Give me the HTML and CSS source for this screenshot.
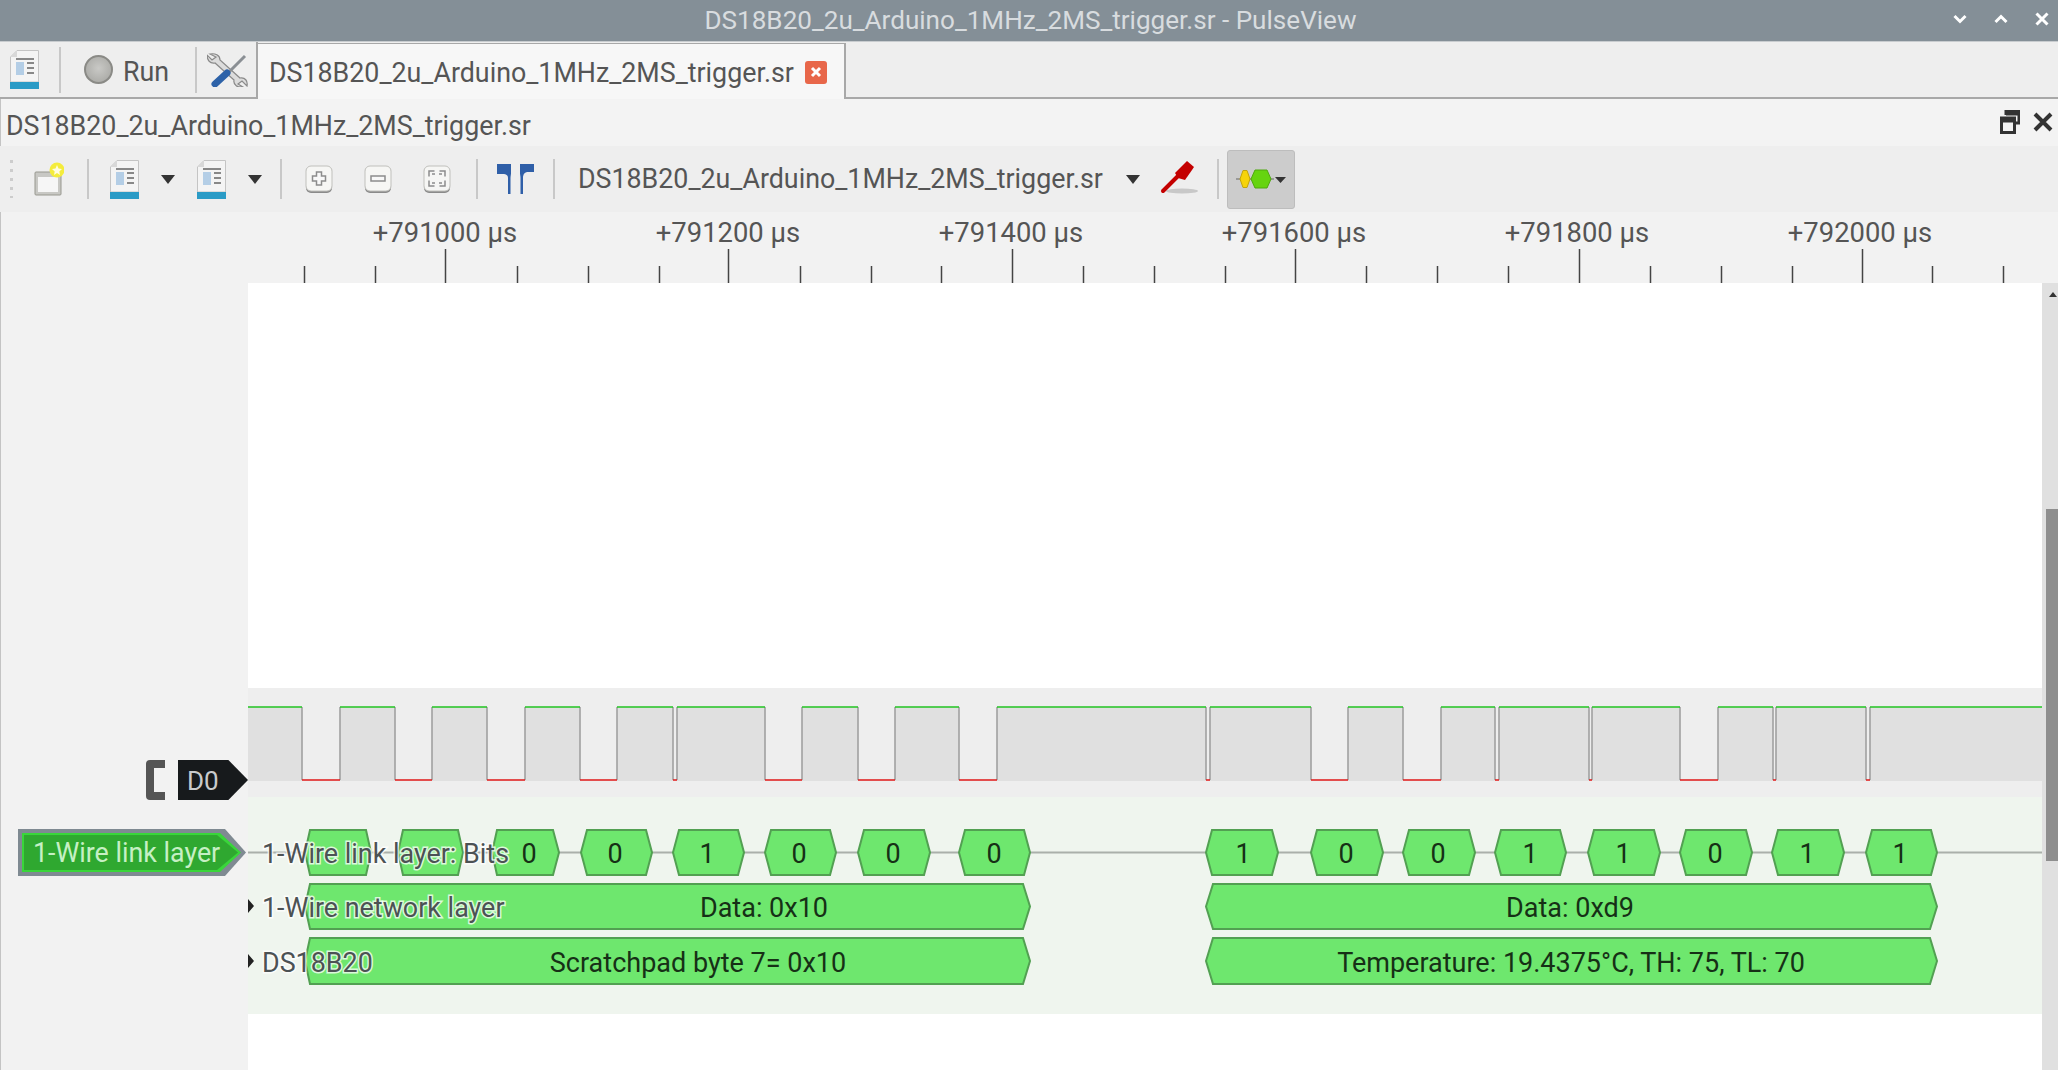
FILE: index.html
```html
<!DOCTYPE html>
<html lang="en">
<head>
    <meta charset="UTF-8">
    <title>DS18B20_2u_Arduino_1MHz_2MS_trigger.sr - PulseView</title>
    <link rel="stylesheet" href="styles.css">
</head>
<body>
    <svg class="defs">
        <symbol id="doc" viewBox="0 0 29 39">
            <path class="doc-paper" d="M7 .5H28.5V32H.5V7Z"/>
            <path class="doc-fold" d="M7 .5V7H.5Z"/>
            <rect class="doc-block" x="6" y="12" width="8" height="13"/>
            <path class="doc-lines" d="M6 9H24M17 13H24M17 18H24M17 23H24"/>
            <rect class="doc-bar" y="32" width="29" height="7"/>
        </symbol>
    </svg>

    <header class="titlebar">
        <span class="title">DS18B20_2u_Arduino_1MHz_2MS_trigger.sr - PulseView</span>
        <div class="win-controls">
            <svg width="14" height="10" viewBox="0 0 14 10"><path d="M1.5 2L7 7.5L12.5 2"/></svg>
            <svg width="14" height="10" viewBox="0 0 14 10"><path d="M1.5 8L7 2.5L12.5 8"/></svg>
            <svg width="14" height="14" viewBox="0 0 14 14"><path d="M1.5 1.5L12.5 12.5M12.5 1.5L1.5 12.5"/></svg>
        </div>
    </header>

    <div class="tabbar">
        <div class="main-tools">
            <svg class="doc-icon" width="29" height="39"><use href="#doc"/></svg>
            <span class="sep sep-tall"></span>
            <span class="run-led"></span>
            <span class="run-label">Run</span>
            <span class="sep sep-tall"></span>
            <svg class="tools-icon" width="41" height="34" viewBox="0 0 41 34">
                <path class="wrench" d="M3 1C8 0 13 2 13 7L33 25C38 24 41 28 40 33L35 28L31 31L36 34C31 35 26 32 27 27L8 10C3 11 0 7 0 2L5 7L9 4Z"/>
                <path class="driver-shaft" d="M22 19L38 3"/>
                <path class="driver-handle" d="M8 31L20 20"/>
            </svg>
        </div>
        <div class="tab">
            <span class="tab-label">DS18B20_2u_Arduino_1MHz_2MS_trigger.sr</span>
            <span class="tab-close">
                <svg width="12" height="12" viewBox="0 0 12 12"><path d="M2 2L10 10M10 2L2 10"/></svg>
            </span>
        </div>
    </div>

    <div class="panel-title">
        <span class="panel-name">DS18B20_2u_Arduino_1MHz_2MS_trigger.sr</span>
        <div class="dock-controls">
            <svg width="20" height="24" viewBox="0 0 20 24"><path d="M6 5V1.5H19V13H15M1.5 8H14.5V22.5H1.5ZM1.5 11H14.5M6 4H19"/></svg>
            <svg width="20" height="20" viewBox="0 0 20 20"><path d="M2 2L18 18M18 2L2 18"/></svg>
        </div>
    </div>

    <div class="toolbar">
        <span class="gripper"></span>
        <svg class="new-view" width="30" height="34" viewBox="0 0 30 34">
            <rect class="win-frame" x="1" y="10" width="26" height="23" rx="1"/>
            <rect class="win-inner" x="4" y="15" width="20" height="15"/>
            <circle class="star-glow" cx="23" cy="8" r="7.5"/>
            <path class="star" d="M23 3L24.5 6.5L28 7L25.3 9.4L26 13L23 11L20 13L20.7 9.4L18 7L21.500 6.500Z"/>
        </svg>
        <span class="sep"></span>
        <svg class="doc-icon" width="29" height="39"><use href="#doc"/></svg>
        <span class="caret"></span>
        <svg class="doc-icon" width="29" height="39"><use href="#doc"/></svg>
        <span class="caret caret-last"></span>
        <span class="sep"></span>
        <svg class="zoom-btn" width="28" height="29" viewBox="0 0 28 29">
            <rect class="btn-shadow" x="1" y="2" width="26" height="26" rx="5"/>
            <rect class="btn-face" x="1" y="1" width="26" height="25" rx="5"/>
            <path class="btn-glyph" d="M11.500 7H16.500V11H20.500V16H16.500V20H11.500V16H7.500V11H11.500Z"/>
        </svg>
        <svg class="zoom-btn" width="28" height="29" viewBox="0 0 28 29">
            <rect class="btn-shadow" x="1" y="2" width="26" height="26" rx="5"/>
            <rect class="btn-face" x="1" y="1" width="26" height="25" rx="5"/>
            <rect class="btn-glyph" x="7" y="11" width="14" height="5"/>
        </svg>
        <svg class="zoom-btn" width="28" height="29" viewBox="0 0 28 29">
            <rect class="btn-shadow" x="1" y="2" width="26" height="26" rx="5"/>
            <rect class="btn-face" x="1" y="1" width="26" height="25" rx="5"/>
            <path class="btn-glyph btn-glyph-open" d="M11.500 6H6V11.500M16.500 6H22V11.500M9 9H12M19 9H16M11.500 21H6V15.500M16.500 21H22V15.500M9 18H12M19 18H16"/>
        </svg>
        <span class="sep"></span>
        <svg class="cursors" width="37" height="30" viewBox="0 0 37 30">
            <path class="cursor-fill" d="M0 0H14V9C14 11 13.500 12 13.500 14V30H11V14C11 11 9 10 6 10H0ZM23 0H37V8H31C28 8 26 10 26 14V30H23.500V14C23.500 12 23 11 23 9Z"/>
        </svg>
        <span class="sep"></span>
        <span class="session">DS18B20_2u_Arduino_1MHz_2MS_trigger.sr</span>
        <span class="caret"></span>
        <svg class="probe" width="40" height="36" viewBox="0 0 40 36">
            <ellipse class="probe-shadow" cx="22" cy="30" rx="16" ry="2.500"/>
            <path class="probe-wire" d="M3 30L20 13"/>
            <path class="probe-body" d="M15 12L24 3L27 0L34 6L32 9L25 19L18 17Z"/>
        </svg>
        <span class="sep"></span>
        <span class="decoder-btn">
            <svg width="50" height="20" viewBox="0 0 50 20">
                <path class="dec-line" d="M0 10H38"/>
                <path class="dec-yellow" d="M4 10L7 1.500H11L14 10L11 18.500H7Z"/>
                <path class="dec-green" d="M15 10L19 1H31L35 10L31 19H19Z"/>
                <path class="dec-caret" d="M39 8H50L44.500 14Z"/>
            </svg>
        </span>
    </div>

    <main class="view">
        <aside class="headers">
            <div class="logic-head">
                <svg class="bracket" width="20" height="40" viewBox="0 0 20 40"><path d="M19 4H4V36H19"/></svg>
                <span class="d0-tag">D0</span>
            </div>
            <div class="decoder-tag">
                <div class="decoder-tag-edge">
                    <div class="decoder-tag-face">1-Wire link layer</div>
                </div>
            </div>
        </aside>

        <section class="traces">
            <svg class="ruler" viewBox="248 212 1810 71" width="1810" height="71">
                <path class="tick" d="M304.500 266V283M375.500 266V283M517.500 266V283M588.500 266V283M659.500 266V283M800.500 266V283M871.500 266V283M941.500 266V283M1083.500 266V283M1154.500 266V283M1225.500 266V283M1366.500 266V283M1437.500 266V283M1508.500 266V283M1650.500 266V283M1721.500 266V283M1792.500 266V283M1932.500 266V283M2003.500 266V283"/>
                <path class="tick" d="M445.500 249V283M728.500 249V283M1012.500 249V283M1295.500 249V283M1579.500 249V283M1862.500 249V283"/>
                <text class="ruler-label" x="445" y="242">+791000 µs</text>
                <text class="ruler-label" x="728" y="242">+791200 µs</text>
                <text class="ruler-label" x="1011" y="242">+791400 µs</text>
                <text class="ruler-label" x="1294" y="242">+791600 µs</text>
                <text class="ruler-label" x="1577" y="242">+791800 µs</text>
                <text class="ruler-label" x="1860" y="242">+792000 µs</text>
            </svg>

            <div class="canvas-row">
                <svg class="canvas" viewBox="248 283 1794 787" width="1794" height="787">
                    <rect class="band-logic" x="248" y="688" width="1794" height="109"/>
                    <rect class="band-decoder" x="248" y="797" width="1794" height="217"/>

                    <!-- D0 -->
                    <path class="wave-fill" d="M248 707H302V781H248ZM340 707H395V781H340ZM432 707H487V781H432ZM525 707H580V781H525ZM617 707H673V781H617ZM677 707H765V781H677ZM802 707H858V781H802ZM895 707H959V781H895ZM997 707H1206V781H997ZM1210 707H1311V781H1210ZM1348 707H1403V781H1348ZM1441 707H1495V781H1441ZM1499 707H1589V781H1499ZM1592 707H1680V781H1592ZM1718 707H1773V781H1718ZM1776 707H1866V781H1776ZM1870 707H2042V781H1870Z"/>
                    <path class="wave-edge" d="M302 707V780M340 707V780M395 707V780M432 707V780M487 707V780M525 707V780M580 707V780M617 707V780M673 707V780M677 707V780M765 707V780M802 707V780M858 707V780M895 707V780M959 707V780M997 707V780M1206 707V780M1210 707V780M1311 707V780M1348 707V780M1403 707V780M1441 707V780M1495 707V780M1499 707V780M1589 707V780M1592 707V780M1680 707V780M1718 707V780M1773 707V780M1776 707V780M1866 707V780M1870 707V780"/>
                    <path class="wave-high" d="M248 707H302M340 707H395M432 707H487M525 707H580M617 707H673M677 707H765M802 707H858M895 707H959M997 707H1206M1210 707H1311M1348 707H1403M1441 707H1495M1499 707H1589M1592 707H1680M1718 707H1773M1776 707H1866M1870 707H2042"/>
                    <path class="wave-low" d="M302 780H340M395 780H432M487 780H525M580 780H617M673 780H677M765 780H802M858 780H895M959 780H997M1206 780H1210M1311 780H1348M1403 780H1441M1495 780H1499M1589 780H1592M1680 780H1718M1773 780H1776M1866 780H1870"/>

                    <!-- decoder rows -->
                    <path class="row-line" d="M248 852.500H2042"/>
                    <polygon class="ann" points="305,852.500 310,830 366,830 371,852.500 366,875 310,875"/>
                    <polygon class="ann" points="398,852.500 403,830 458,830 463,852.500 458,875 403,875"/>
                    <polygon class="ann" points="492,852.500 497,830 553,830 559,852.500 553,875 497,875"/>
                    <polygon class="ann" points="581,852.500 587,830 646,830 652,852.500 646,875 587,875"/>
                    <polygon class="ann" points="673,852.500 679,830 738,830 744,852.500 738,875 679,875"/>
                    <polygon class="ann" points="765,852.500 771,830 830,830 836,852.500 830,875 771,875"/>
                    <polygon class="ann" points="858,852.500 864,830 924,830 930,852.500 924,875 864,875"/>
                    <polygon class="ann" points="959,852.500 965,830 1024,830 1030,852.500 1024,875 965,875"/>
                    <polygon class="ann" points="1206,852.500 1212,830 1272,830 1278,852.500 1272,875 1212,875"/>
                    <polygon class="ann" points="1311,852.500 1317,830 1377,830 1383,852.500 1377,875 1317,875"/>
                    <polygon class="ann" points="1403,852.500 1409,830 1469,830 1475,852.500 1469,875 1409,875"/>
                    <polygon class="ann" points="1495,852.500 1501,830 1560,830 1566,852.500 1560,875 1501,875"/>
                    <polygon class="ann" points="1588,852.500 1594,830 1654,830 1660,852.500 1654,875 1594,875"/>
                    <polygon class="ann" points="1680,852.500 1686,830 1746,830 1752,852.500 1746,875 1686,875"/>
                    <polygon class="ann" points="1772,852.500 1778,830 1838,830 1844,852.500 1838,875 1778,875"/>
                    <polygon class="ann" points="1866,852.500 1872,830 1931,830 1937,852.500 1931,875 1872,875"/>
                    <polygon class="ann" points="305,906.500 310,884 1023,884 1030,906.500 1023,929 310,929"/>
                    <polygon class="ann" points="1206,906.500 1213,884 1930,884 1937,906.500 1930,929 1213,929"/>
                    <polygon class="ann" points="305,961 310,938 1023,938 1030,961 1023,984 310,984"/>
                    <polygon class="ann" points="1206,961 1213,938 1930,938 1937,961 1930,984 1213,984"/>

                    <text class="ann-text" x="529" y="863">0</text>
                    <text class="ann-text" x="615" y="863">0</text>
                    <text class="ann-text" x="707" y="863">1</text>
                    <text class="ann-text" x="799" y="863">0</text>
                    <text class="ann-text" x="893" y="863">0</text>
                    <text class="ann-text" x="994" y="863">0</text>
                    <text class="ann-text" x="1243" y="863">1</text>
                    <text class="ann-text" x="1346" y="863">0</text>
                    <text class="ann-text" x="1438" y="863">0</text>
                    <text class="ann-text" x="1530" y="863">1</text>
                    <text class="ann-text" x="1623" y="863">1</text>
                    <text class="ann-text" x="1715" y="863">0</text>
                    <text class="ann-text" x="1807" y="863">1</text>
                    <text class="ann-text" x="1900" y="863">1</text>
                    <text class="ann-text" x="764" y="917">Data: 0x10</text>
                    <text class="ann-text" x="1570" y="917">Data: 0xd9</text>
                    <text class="ann-text" x="698" y="972">Scratchpad byte 7= 0x10</text>
                    <text class="ann-text" x="1571" y="972">Temperature: 19.4375°C, TH: 75, TL: 70</text>

                    <path class="row-arrow" d="M248 899L254 906L248 913ZM248 954L254 961L248 968Z"/>
                    <text class="row-label" x="262" y="863">1-Wire link layer: Bits</text>
                    <text class="row-label" x="262" y="917">1-Wire network layer</text>
                    <text class="row-label" x="262" y="972">DS18B20</text>
                </svg>
                <div class="scrollbar">
                    <span class="scroll-up"></span>
                    <span class="scroll-thumb"></span>
                </div>
            </div>
        </section>
    </main>
</body>
</html>
```
FILE: styles.css
```css
* {
    box-sizing: border-box;
}

html, body {
    margin: 0;
    height: 100%;
}

body {
    font-family: Roboto, sans-serif;
    font-size: 26.8px;
    color: #555;
    background-color: #f2f2f2;
    display: flex;
    flex-direction: column;
    height: 1070px;
    overflow: hidden;
}

.defs {
    display: none;
}

.doc-paper {
    fill: #f4f4f4;
    stroke: #c4c4c4;
}

.doc-fold {
    fill: #d8d8d8;
}

.doc-block {
    fill: #b4cee6;
}

.doc-lines {
    fill: none;
    stroke: #888;
    stroke-width: 2;
}

.doc-bar {
    fill: #2a9bc6;
}

/* window title */
.titlebar {
    height: 42px;
    flex: none;
    background-color: #848f97;
    border-bottom: 1px solid #c8cccf;
    position: relative;
    display: flex;
    align-items: center;
    justify-content: center;
}

.title {
    color: #d8dcdf;
    font-size: 26.1px;
    margin: -2px 0 0 3px;
}

.win-controls {
    position: absolute;
    right: 9px;
    top: 12px;
    display: flex;
    gap: 27px;
    align-items: center;
}

.win-controls path {
    fill: none;
    stroke: #fff;
    stroke-width: 3;
}

/* tabs */
.tabbar {
    height: 57px;
    flex: none;
    display: flex;
    background-color: #eee;
    border-bottom: 2px solid #a8a8a8;
}

.main-tools {
    width: 258px;
    height: 57px;
    flex: none;
    display: flex;
    align-items: center;
    padding-left: 10px;
    border-right: 2px solid #a8a8a8;
    border-bottom: 2px solid #a8a8a8;
}

.sep {
    width: 2px;
    height: 46px;
    flex: none;
    background-color: #c8c8c8;
}

.main-tools .doc-icon {
    margin-right: 20px;
}

.run-led {
    width: 29px;
    height: 29px;
    flex: none;
    margin-left: 23px;
    border-radius: 50%;
    border: 2px solid #8a8a86;
    background: radial-gradient(circle at 50% 45%, #c9c9c6, #a3a39f);
}

.run-label {
    margin: 4px 26px 0 10px;
}

.tools-icon {
    margin-left: 10px;
}

.wrench {
    fill: #dcdcdc;
    stroke: #8a8a8a;
    stroke-width: 1.2;
}

.driver-shaft {
    fill: none;
    stroke: #8a8f94;
    stroke-width: 3;
}

.driver-handle {
    fill: none;
    stroke: #2d62a8;
    stroke-width: 7;
    stroke-linecap: round;
}

.tab {
    width: 588px;
    height: 57px;
    margin-top: 1px;
    flex: none;
    display: flex;
    align-items: center;
    padding-left: 11px;
    background-color: #f7f7f7;
    border-top: 1px solid #a8a8a8;
    border-right: 2px solid #a8a8a8;
}

.tab-label {
    width: 536px;
    flex: none;
    margin-top: 2px;
    white-space: nowrap;
}

.tab-close {
    width: 22px;
    height: 23px;
    display: flex;
    align-items: center;
    justify-content: center;
    background-color: #e8674a;
    border-radius: 3px;
}

.tab-close path {
    fill: none;
    stroke: #fff;
    stroke-width: 3;
}

/* dock title */
.panel-title {
    height: 47px;
    flex: none;
    display: flex;
    align-items: center;
    justify-content: space-between;
    padding: 0 5px 0 5px;
    background-color: #f3f3f3;
    border-left: 1px solid #c4c4c4;
}

.panel-name {
    margin-top: 6px;
}

.dock-controls {
    display: flex;
    align-items: center;
    gap: 13px;
    margin-top: -2px;
}

.dock-controls path {
    fill: none;
    stroke: #333;
    stroke-width: 3;
}

.dock-controls svg:last-child path {
    stroke-width: 4;
}

/* toolbar */
.toolbar {
    height: 66px;
    flex: none;
    display: flex;
    align-items: center;
    padding-left: 10px;
    background-color: #eee;
}

.gripper {
    width: 3px;
    height: 38px;
    flex: none;
    margin-right: 21px;
    background: repeating-linear-gradient(#ccc 0 3px, transparent 3px 9px);
}

.new-view {
    margin-right: 23px;
}

.win-frame {
    fill: #c8c8c4;
    stroke: #98988f;
}

.win-inner {
    fill: #f6f6f6;
}

.star-glow {
    fill: #f4ec3c;
}

.star {
    fill: #fffde0;
}

.toolbar .sep {
    height: 40px;
}

.toolbar .sep:nth-of-type(2) {
    margin-right: 21px;
}

.caret {
    width: 0;
    height: 0;
    flex: none;
    margin: 0 22px 0 22px;
    border-left: 7.5px solid transparent;
    border-right: 7.5px solid transparent;
    border-top: 9px solid #333;
}

.caret-last {
    margin-right: 18px;
}

.zoom-btn {
    margin-right: 31px;
}

.sep + .zoom-btn {
    margin-left: 23px;
}

.btn-shadow {
    fill: #8a8a8a;
}

.btn-face {
    fill: #f6f6f4;
    stroke: #c0c0bc;
}

.btn-glyph {
    fill: #f8f8f8;
    stroke: #8c8c8c;
    stroke-width: 1.500;
}

.btn-glyph-open {
    fill: none;
}

.zoom-btn + .sep {
    margin-left: -6px;
}

.cursors {
    margin: 0 19px;
}

.cursor-fill {
    fill: #2f5fa8;
}

.session {
    margin-left: 23px;
    white-space: nowrap;
}

.session + .caret {
    margin: 0 20px 0 23px;
}

.probe {
    margin-right: 17px;
}

.probe-shadow {
    fill: #c8c8c8;
}

.probe-wire {
    fill: none;
    stroke: #c40000;
    stroke-width: 4;
    stroke-linecap: round;
}

.probe-body {
    fill: #c40000;
}

.decoder-btn {
    width: 68px;
    height: 59px;
    flex: none;
    margin-left: 8px;
    display: flex;
    align-items: center;
    justify-content: center;
    background-color: #ccc;
    border: 1px solid #bdbdbd;
    border-radius: 3px;
}

.dec-line {
    stroke: #999;
    stroke-width: 2;
}

.dec-yellow {
    fill: #f6d30a;
    stroke: #c2a50a;
}

.dec-green {
    fill: #66d40f;
    stroke: #4fa80e;
}

.dec-caret {
    fill: #333;
}

/* main view */
.view {
    flex: 1;
    display: flex;
    min-height: 0;
    border-left: 1px solid #c4c4c4;
}

.headers {
    width: 247px;
    flex: none;
    padding-top: 548px;
    display: flex;
    flex-direction: column;
}

.logic-head {
    height: 40px;
    display: flex;
    align-items: center;
    justify-content: flex-end;
}

.bracket {
    margin-right: 12px;
}

.bracket path {
    fill: none;
    stroke: #555;
    stroke-width: 8;
    stroke-linejoin: round;
}

.d0-tag {
    width: 70px;
    height: 40px;
    padding-left: 9px;
    color: #c9cbcc;
    line-height: 42px;
    font-size: 26px;
    background-color: #171a1c;
    clip-path: polygon(0 0, 72% 0, 100% 50%, 72% 100%, 0 100%);
}

.decoder-tag,
.decoder-tag-edge,
.decoder-tag-face {
    clip-path: polygon(0 0, calc(100% - 21px) 0, 100% 50%, calc(100% - 21px) 100%, 0 100%);
}

.decoder-tag {
    width: 228px;
    height: 47px;
    margin: 29px 0 0 17px;
    padding: 4px 5px 4px 4px;
    background-color: #7f8a92;
}

.decoder-tag-edge {
    height: 39px;
    padding: 2px 3px 2px 2px;
    background-color: #39d63a;
}

.decoder-tag-face {
    height: 35px;
    padding-left: 9px;
    color: #c6f0c4;
    line-height: 37px;
    white-space: nowrap;
    background-color: #2fa830;
}

.traces {
    flex: 1;
    min-width: 0;
    display: flex;
    flex-direction: column;
}

.ruler {
    display: block;
    flex: none;
}

.tick {
    stroke: #444;
    stroke-width: 1.500;
}

.ruler-label {
    fill: #555;
    font-size: 27.4px;
    text-anchor: middle;
}

.canvas-row {
    flex: 1;
    display: flex;
    min-height: 0;
}

.canvas {
    display: block;
    flex: none;
    background-color: #fff;
}

.band-logic {
    fill: #eee;
}

.band-decoder {
    fill: #eff5ee;
}

.wave-fill {
    fill: #e0e0e0;
}

.wave-edge {
    fill: none;
    stroke: #9c9c9c;
    stroke-width: 1.500;
}

.wave-high {
    fill: none;
    stroke: #22c422;
    stroke-width: 1.500;
}

.wave-low {
    fill: none;
    stroke: #e01818;
    stroke-width: 1.500;
}

.row-line {
    stroke: #aab0aa;
    stroke-width: 2;
}

.ann {
    fill: #6ee76e;
    stroke: #52a052;
    stroke-width: 2;
}

.ann-text {
    fill: #163016;
    font-size: 27px;
    text-anchor: middle;
}

.row-arrow {
    fill: #222;
}

.row-label {
    fill: #4c5254;
    font-size: 26.9px;
    stroke: rgba(255, 255, 255, 0.75);
    stroke-width: 3px;
    paint-order: stroke;
}

.scrollbar {
    width: 16px;
    flex: none;
    position: relative;
    background-color: #e0e0e0;
}

.scroll-up {
    position: absolute;
    left: 7px;
    top: 9px;
    border-left: 4px solid transparent;
    border-right: 4px solid transparent;
    border-bottom: 5px solid #333;
}

.scroll-thumb {
    position: absolute;
    left: 4px;
    right: 0;
    top: 226px;
    height: 352px;
    background-color: #8e8e8e;
}
```
